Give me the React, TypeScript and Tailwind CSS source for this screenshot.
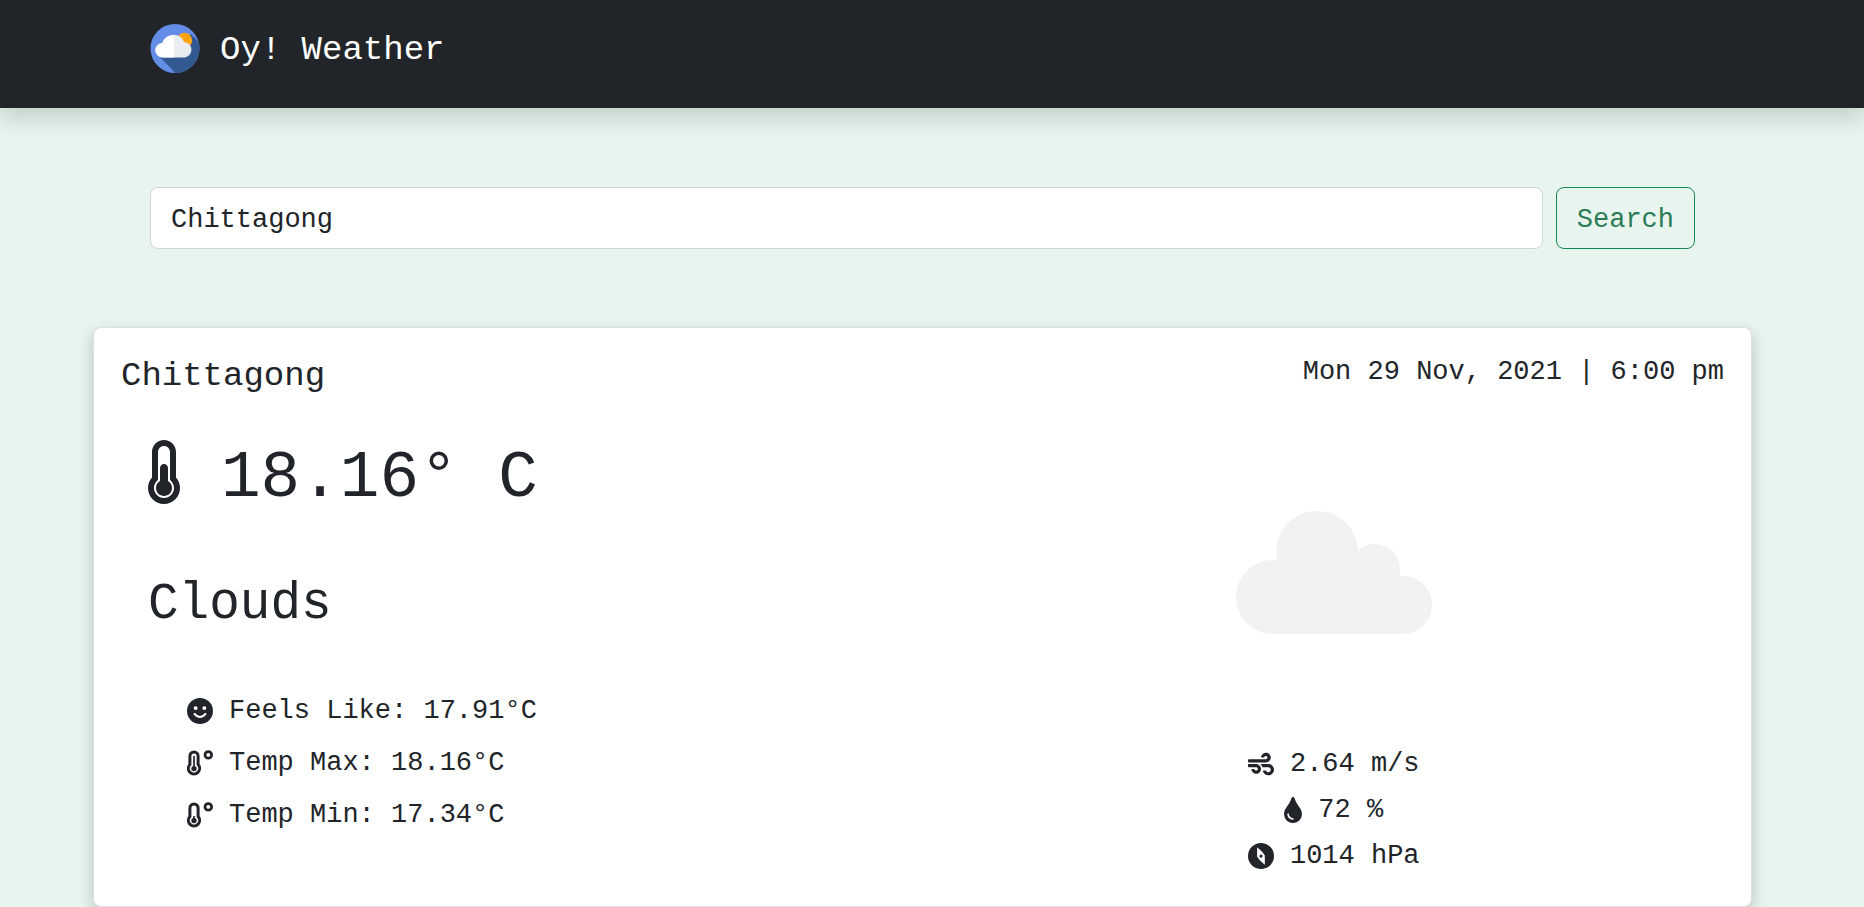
import React from "react";
import { FaThermometerHalf, FaTint, FaWind } from "react-icons/fa";

function Logo() {
  return (
    <svg viewBox="0 0 50 50" className="size-[50px]" aria-hidden="true">
      <defs>
        <clipPath id="logo-disc">
          <circle cx="25" cy="24.500" r="24.500" />
        </clipPath>
      </defs>
      <g clipPath="url(#logo-disc)">
        <rect width="50" height="50" fill="#648de8" />
        <path d="M41 10 L60 30 V60 H36 L9 32 L24 20 Z" fill="#325992" />
      </g>
      <circle cx="34.500" cy="16.500" r="7.700" fill="#ffa310" />
      <path
        d="M13 33.500 a7.300 7.300 0 0 1 -.6 -14.600 a11.500 11.500 0 0 1 21.600 -.9 a7.800 7.800 0 0 1 .8 15.500 z"
        fill="#e9edf2"
      />
      <path
        d="M24 33.500 H13 a7.300 7.300 0 0 1 -.6 -14.600 A11.500 11.500 0 0 1 24 11.100 z"
        fill="#ffffff"
      />
    </svg>
  );
}

function SmileIcon() {
  return (
    <svg viewBox="0 0 24 24" className="size-[26px]" aria-hidden="true">
      <circle cx="12" cy="12" r="12" fill="currentColor" />
      <circle cx="8" cy="9.300" r="1.800" fill="#fff" />
      <circle cx="16" cy="9.300" r="1.800" fill="#fff" />
      <path d="M6.500 14.200 Q12 21 17.500 14.200" fill="none" stroke="#fff" strokeWidth="1.900" />
    </svg>
  );
}

function TemperatureIcon({ high }: { high: boolean }) {
  return (
    <svg viewBox="0 0 26 26" className="size-[26px]" aria-hidden="true">
      <g fill="none" stroke="currentColor">
        <path
          d="M2.900 6 a4.100 4.100 0 0 1 8.200 0 V14.600 a5.600 5.600 0 1 1 -8.200 0 Z"
          strokeWidth="3"
        />
        <circle cx="21.300" cy="4.900" r="3.300" strokeWidth="2.800" />
        <path d={high ? "M7 6.500 V18" : "M7 14.500 V18"} strokeWidth="1.700" strokeLinecap="round" />
      </g>
      <circle cx="7" cy="18.600" r="2.700" fill="currentColor" />
    </svg>
  );
}

function CompassIcon() {
  return (
    <svg viewBox="0 0 24 24" className="size-[26px]" aria-hidden="true">
      <circle cx="12" cy="12" r="12" fill="currentColor" />
      <path d="M8.400 4 L13.300 8.300 L15.500 11.500 V20 L10.700 15.800 L8.400 12.500 Z" fill="#fff" />
      <circle cx="12" cy="12" r="1.500" fill="currentColor" />
    </svg>
  );
}

function CloudPicture() {
  return (
    <svg viewBox="0 0 196 124" className="h-[124px] w-[196px]" role="img" aria-label="Clouds">
      <g fill="#f2f2f2">
        <circle cx="37" cy="86" r="37" />
        <circle cx="81" cy="41" r="41" />
        <circle cx="139" cy="58" r="25" />
        <circle cx="167" cy="94" r="29" />
        <rect x="37" y="50" width="44" height="73" />
        <rect x="80" y="40" width="58" height="83" />
        <rect x="130" y="60" width="34" height="63" />
        <rect x="37" y="110" width="130" height="13" />
      </g>
    </svg>
  );
}

const readings = [
  { icon: <SmileIcon />, text: "Feels Like: 17.91°C" },
  { icon: <TemperatureIcon high />, text: "Temp Max: 18.16°C" },
  { icon: <TemperatureIcon high={false} />, text: "Temp Min: 17.34°C" },
];

const conditions = [
  { icon: <FaWind className="size-[26px]" />, text: "2.64 m/s" },
  { icon: <FaTint className="h-[26px] w-[18px]" />, text: "72 %" },
  { icon: <CompassIcon />, text: "1014 hPa" },
];

export default function App() {
  return (
    <div className="min-h-screen overflow-hidden bg-[#e7f5ee] font-['Liberation_Mono',monospace] text-[27px] text-[#212529]">
      <header className="bg-[#212529] px-[150px] pt-6 pb-8 shadow-[0_11px_22px_rgba(0,0,0,0.15)]">
        <a href="#" className="flex items-start gap-5 text-[34px] leading-[52px] text-white">
          <Logo />
          Oy! Weather
        </a>
      </header>

      <main className="pr-[112px] pl-[93px]">
        <form
          className="flex gap-[13px] px-[57px] pt-[79px] pb-[78px]"
          onSubmit={(event) => event.preventDefault()}
        >
          <input
            type="search"
            aria-label="City"
            defaultValue="Chittagong"
            className="h-[62px] min-w-0 flex-1 rounded-lg border border-[#ced4da] bg-white px-5 pt-1 outline-none"
          />
          <button
            type="submit"
            className="h-[62px] rounded-lg border border-[#198754] px-5 pt-1 text-[#2c7d57]"
          >
            Search
          </button>
        </form>

        <section className="rounded-lg border border-black/[.125] bg-white pt-6 pb-[27px] shadow-[0_6px_16px_rgba(0,0,0,0.2)]">
          <div className="flex items-start justify-between px-[27px] leading-10">
            <h1 className="pt-1 text-[34px] leading-10">Chittagong</h1>
            <p>Mon 29 Nov, 2021 | 6:00 pm</p>
          </div>

          <div className="mt-[43px] grid grid-cols-2">
            <div className="pl-[54px]">
              <p className="flex items-start gap-[41px] text-[66px] leading-20">
                <FaThermometerHalf className="h-[66px] w-8" />
                18.16° C
              </p>
              <p className="mt-14 text-[51px] leading-[60px]">Clouds</p>
              <ul className="mt-[50px] pl-[39px] leading-[52px]">
                {readings.map((item) => (
                  <li key={item.text} className="flex items-center gap-4">
                    {item.icon}
                    {item.text}
                  </li>
                ))}
              </ul>
            </div>

            <div className="flex flex-col items-center pt-[72px] pr-1.5">
              <CloudPicture />
              <ul className="mt-[106px] leading-[46px]">
                {conditions.map((item) => (
                  <li key={item.text} className="flex items-center justify-center gap-4">
                    {item.icon}
                    {item.text}
                  </li>
                ))}
              </ul>
            </div>
          </div>
        </section>
      </main>
    </div>
  );
}
